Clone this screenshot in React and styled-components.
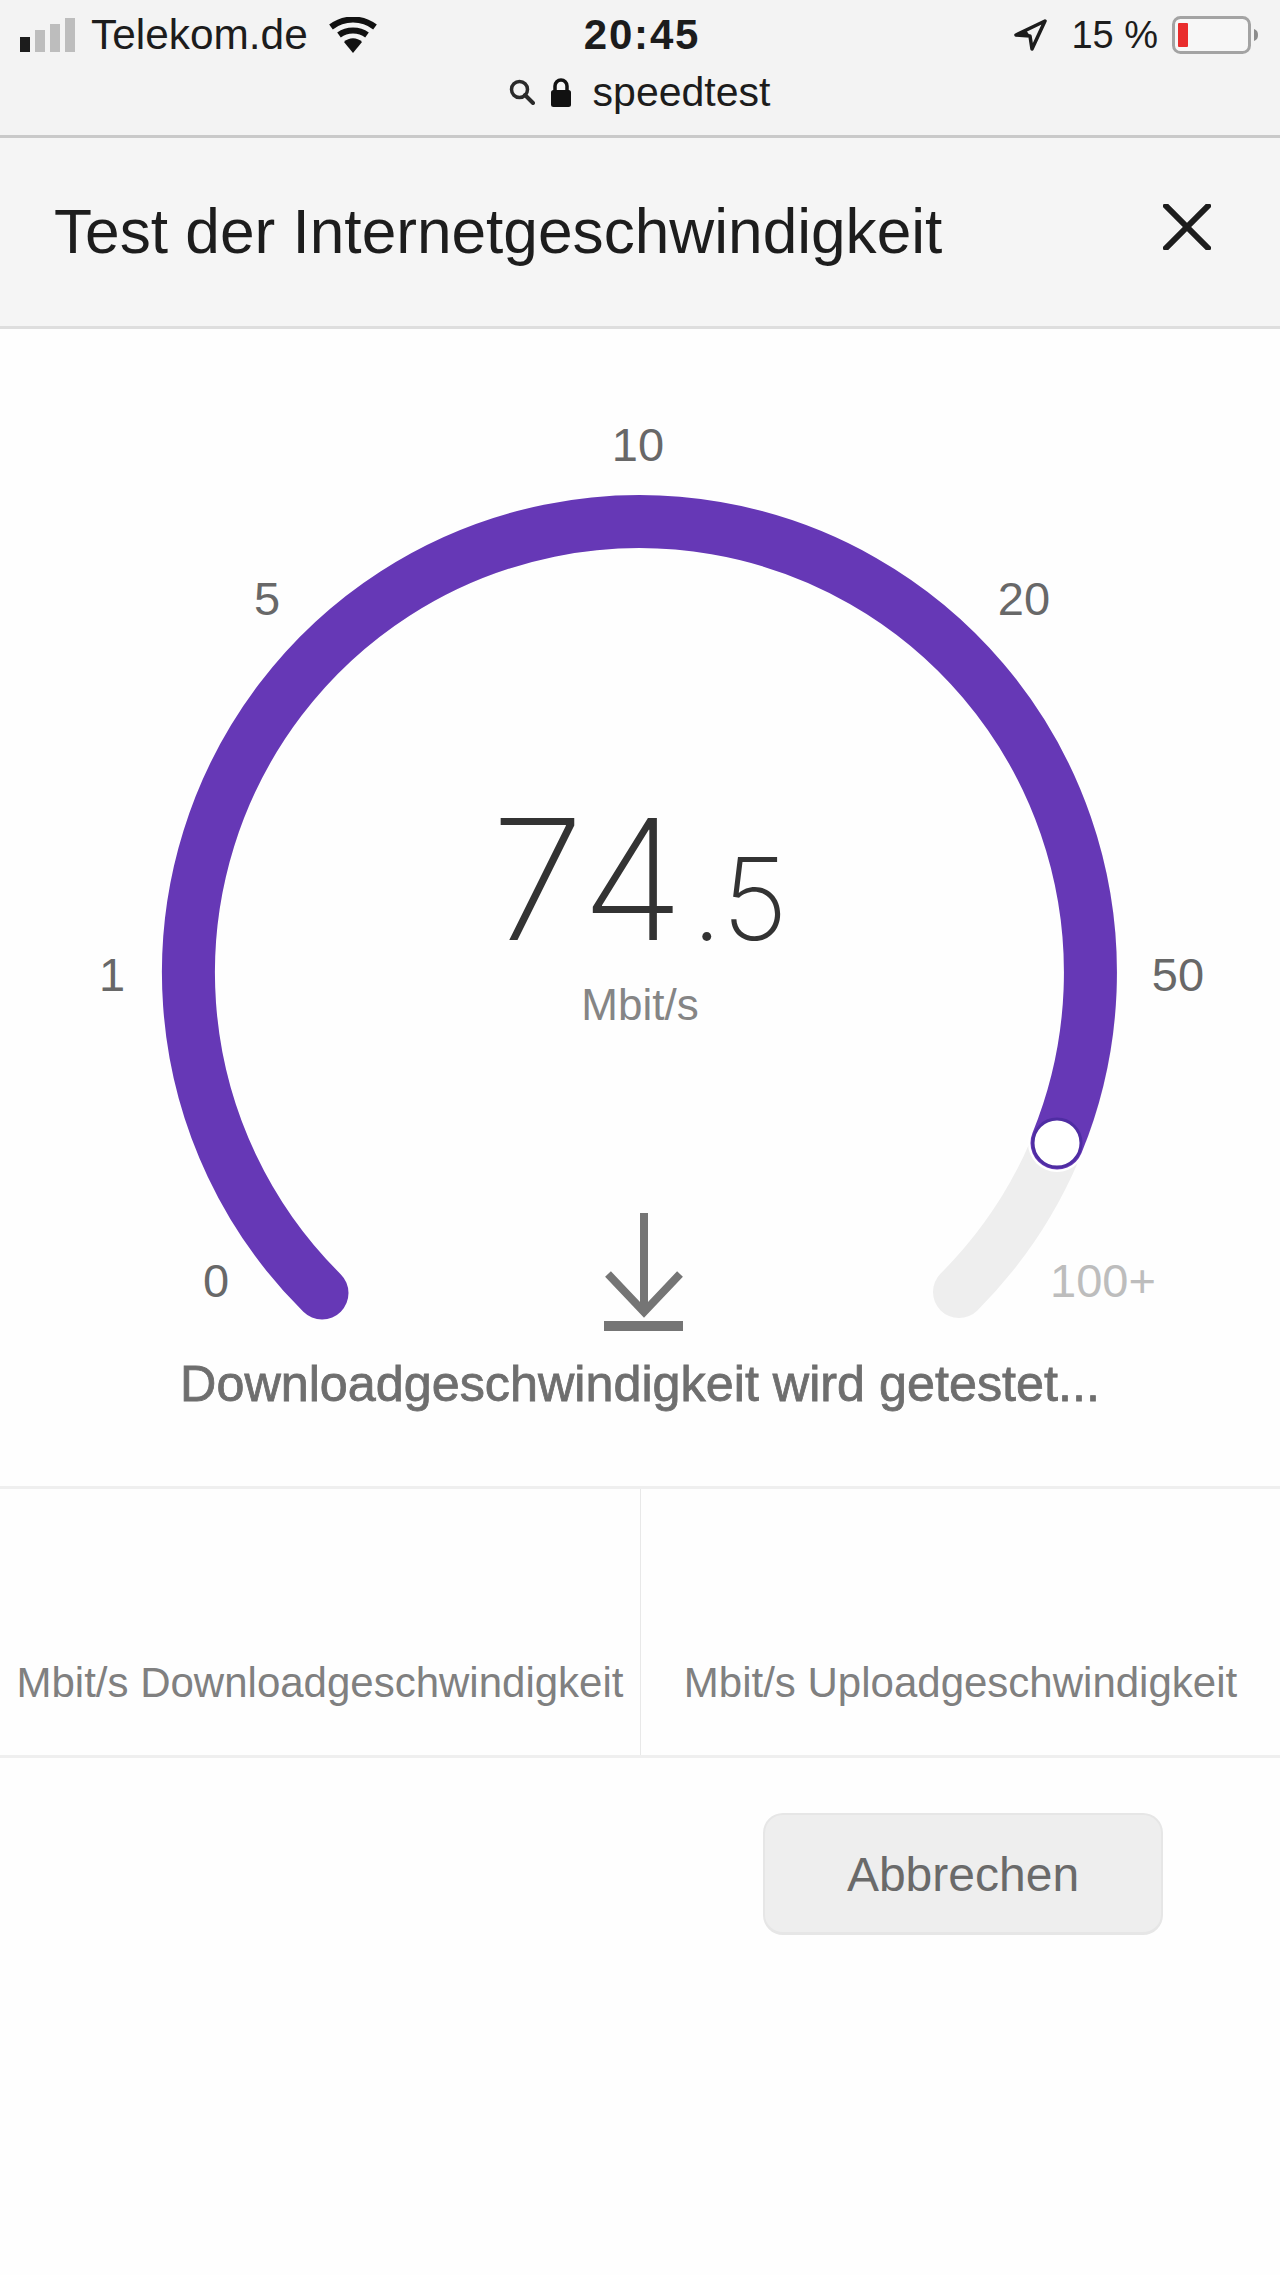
import React from "react";
import styled, { createGlobalStyle } from "styled-components";

const GlobalStyle = createGlobalStyle`
  html, body {
    margin: 0;
    padding: 0;
    background: #fff;
  }
  body {
    font-family: "Liberation Sans", Arial, sans-serif;
  }
`;

const Page = styled.div`
  width: 1280px;
  height: 2275px;
  background: #fefefe;
  overflow: hidden;
`;

const StatusBar = styled.div`
  height: 138px;
  box-sizing: border-box;
  background: #f3f3f3;
  border-bottom: 3px solid #c9c9c9;
  padding: 15px 21px 0 20px;
  color: #1c1c1c;
`;

const StatusRow = styled.div`
  display: grid;
  grid-template-columns: 1fr auto 1fr;
  align-items: center;
  height: 40px;
`;

const StatusLeft = styled.div`
  display: flex;
  align-items: center;
`;

const StatusRight = styled.div`
  display: flex;
  align-items: center;
  justify-content: flex-end;
`;

const Carrier = styled.span`
  font-size: 42.4px;
  line-height: 40px;
  margin-left: 16px;
  margin-right: 21px;
`;

const Clock = styled.span`
  font-size: 42px;
  line-height: 40px;
  font-weight: 700;
  letter-spacing: 1.8px;
  padding-left: 5px;
`;

const BatteryText = styled.span`
  font-size: 38px;
  line-height: 40px;
  margin-left: 24px;
  margin-right: 14px;
`;

const UrlRow = styled.div`
  display: flex;
  align-items: center;
  justify-content: center;
  gap: 15px;
  margin-top: 17px;
`;

const UrlText = styled.span`
  font-size: 41px;
  line-height: 40px;
  margin-left: 6px;
`;

const Header = styled.div`
  height: 191px;
  box-sizing: border-box;
  background: #f5f5f5;
  border-bottom: 3px solid #dedede;
  display: flex;
  align-items: center;
  justify-content: space-between;
  padding: 0 69px 0 54px;
`;

const Title = styled.h1`
  margin: 0;
  font-size: 62.2px;
  line-height: 70px;
  font-weight: 400;
  color: #1d1d1d;
`;

const CloseButton = styled.button`
  border: 0;
  padding: 0;
  background: none;
  display: block;
  height: 46px;
  margin-top: -10px;
`;

const Dial = styled.div`
  position: relative;
  width: 1280px;
  height: 1020px;
`;

const DialDrawing = styled.svg`
  display: block;
  width: 1280px;
  height: 1020px;
`;

const Tick = styled.span`
  position: absolute;
  left: ${(p) => p.$x}px;
  top: ${(p) => p.$y}px;
  transform: translate(-50%, -50%);
  font-size: 47px;
  line-height: 50px;
  color: ${(p) => (p.$off ? "#bdbdbd" : "#686868")};
`;

const Readout = styled.div`
  position: absolute;
  top: 455px;
  left: 0;
  width: 1280px;
  display: flex;
  flex-direction: column;
  align-items: center;
`;

const Speed = styled.div`
  font-family: Inter, "Liberation Sans", sans-serif;
  font-weight: 250;
  font-size: 168px;
  line-height: 190px;
  letter-spacing: 7px;
  color: #333;
  white-space: nowrap;
`;

const SpeedFraction = styled.span`
  font-size: 114px;
  letter-spacing: 1px;
`;

const Unit = styled.div`
  font-size: 44px;
  line-height: 48px;
  color: #858585;
  margin-top: -13px;
`;

const Caption = styled.div`
  height: 137px;
  text-align: center;
  font-size: 50.3px;
  line-height: 54px;
  color: #6e6e6e;
  -webkit-text-stroke: 0.8px #6e6e6e;
  padding-top: 8px;
  box-sizing: border-box;
`;

const StatsRow = styled.div`
  display: grid;
  grid-template-columns: 1fr 1fr;
  height: 272px;
  box-sizing: border-box;
  border-top: 3px solid #efefef;
  border-bottom: 3px solid #efefef;
`;

const StatCell = styled.div`
  display: flex;
  align-items: flex-end;
  justify-content: center;
  padding-bottom: 49px;
  font-size: 42px;
  line-height: 46px;
  color: #808080;
  white-space: nowrap;
  border-left: ${(p) => (p.$divided ? "1px solid #e8e8e8" : "0")};
`;

const Actions = styled.div`
  display: flex;
  justify-content: flex-end;
  padding: 55px 117px 0 0;
`;

const CancelButton = styled.button`
  width: 400px;
  height: 122px;
  box-sizing: border-box;
  background: #eeeeee;
  border: 2px solid #e6e6e6;
  border-bottom-width: 3px;
  border-radius: 20px;
  padding-top: 3px;
  font-family: "Liberation Sans", Arial, sans-serif;
  font-size: 48px;
  color: #6a6a6a;
`;

const SignalIcon = () => (
  <svg width="55" height="36" viewBox="0 0 55 36">
    <rect x="0" y="20" width="10" height="15" fill="#1c1c1c" />
    <rect x="15" y="13" width="10" height="22" fill="#bdbdbd" />
    <rect x="30" y="7" width="10" height="28" fill="#bdbdbd" />
    <rect x="45" y="1" width="10" height="34" fill="#bdbdbd" />
  </svg>
);

const WifiIcon = () => (
  <svg width="48" height="36" viewBox="0 0 48 36">
    <path d="M2 10 C15 0 33 0 46 10" fill="none" stroke="#111" strokeWidth="6" />
    <path d="M10 18 C18 12 30 12 38 18" fill="none" stroke="#111" strokeWidth="6" />
    <path d="M15 25 C20 20 28 20 33 25 L24 36 Z" fill="#111" />
  </svg>
);

const SearchIcon = () => (
  <svg width="26" height="26" viewBox="0 0 26 26">
    <circle cx="10.5" cy="10.5" r="8" fill="none" stroke="#2a2a2a" strokeWidth="3.5" />
    <path d="M16 16 L24 24" stroke="#2a2a2a" strokeWidth="4" strokeLinecap="round" />
  </svg>
);

const LockIcon = () => (
  <svg width="22" height="29" viewBox="0 0 22 29">
    <path d="M5 13 V8 a6 6 0 0 1 12 0 V13" fill="none" stroke="#111" strokeWidth="3.5" />
    <rect x="1" y="12" width="20" height="17" rx="2.5" fill="#111" />
  </svg>
);

const LocationIcon = () => (
  <svg width="33" height="32" viewBox="0 0 33 32">
    <path d="M31 2 L2 16 L16 17 L18 30 Z" fill="none" stroke="#1c1c1c" strokeWidth="3.5" strokeLinejoin="round" />
    <path d="M2 16 L16 17 L12 11 Z" fill="#1c1c1c" />
  </svg>
);

const BatteryIcon = () => (
  <svg width="87" height="38" viewBox="0 0 87 38">
    <rect x="1.5" y="1.5" width="76" height="35" rx="7" fill="#f7f7f7" stroke="#a3a3a3" strokeWidth="3" />
    <rect x="6" y="7" width="10" height="24" rx="1" fill="#e92c2c" />
    <path d="M82 13 C85 14 86 16 86 19 C86 22 85 24 82 25 Z" fill="#8c8c8c" />
  </svg>
);

const CloseIcon = () => (
  <svg width="48" height="46" viewBox="0 0 48 46">
    <path d="M3 2 L45 44 M45 2 L3 44" stroke="#1d1d1d" strokeWidth="6" strokeLinecap="round" />
  </svg>
);

// everything in here is in page coordinates, dial starts at y=329
const Gauge = () => (
  <DialDrawing viewBox="0 329 1280 1020">
    <path
      d="M 321 1292 A 451 451 0 1 1 959 1292"
      fill="none"
      stroke="#eeeeee"
      strokeWidth="52"
      strokeLinecap="round"
    />
    <circle cx="1057" cy="1143" r="29" fill="#fff" />
    <path
      d="M 322 1293 A 451 451 0 1 1 1057 1143"
      fill="none"
      stroke="#6638b6"
      strokeWidth="53"
      strokeLinecap="round"
    />
    <circle cx="1057" cy="1143" r="24" fill="#fff" stroke="#4f2da3" strokeWidth="3" />
    <path d="M644 1213 V1312 M608 1274 L644 1312 L680 1274" fill="none" stroke="#757575" strokeWidth="8" />
    <rect x="604" y="1321" width="79" height="10" fill="#757575" />
  </DialDrawing>
);

const ticks = [
  { label: "10", x: 638, y: 116 },
  { label: "5", x: 267, y: 270 },
  { label: "20", x: 1024, y: 270 },
  { label: "1", x: 112, y: 646 },
  { label: "50", x: 1178, y: 646 },
  { label: "0", x: 216, y: 952 },
  { label: "100+", x: 1103, y: 952, off: true },
];

const App = () => {
  return (
    <Page>
      <GlobalStyle />
      <StatusBar>
        <StatusRow>
          <StatusLeft>
            <SignalIcon />
            <Carrier>Telekom.de</Carrier>
            <WifiIcon />
          </StatusLeft>
          <Clock>20:45</Clock>
          <StatusRight>
            <LocationIcon />
            <BatteryText>15 %</BatteryText>
            <BatteryIcon />
          </StatusRight>
        </StatusRow>
        <UrlRow>
          <SearchIcon />
          <LockIcon />
          <UrlText>speedtest</UrlText>
        </UrlRow>
      </StatusBar>
      <Header>
        <Title>Test der Internetgeschwindigkeit</Title>
        <CloseButton>
          <CloseIcon />
        </CloseButton>
      </Header>
      <Dial>
        <Gauge />
        {ticks.map((tick) => (
          <Tick key={tick.label} $x={tick.x} $y={tick.y} $off={tick.off}>
            {tick.label}
          </Tick>
        ))}
        <Readout>
          <Speed>
            74<SpeedFraction>.5</SpeedFraction>
          </Speed>
          <Unit>Mbit/s</Unit>
        </Readout>
      </Dial>
      <Caption>Downloadgeschwindigkeit wird getestet...</Caption>
      <StatsRow>
        <StatCell>Mbit/s Downloadgeschwindigkeit</StatCell>
        <StatCell $divided>Mbit/s Uploadgeschwindigkeit</StatCell>
      </StatsRow>
      <Actions>
        <CancelButton>Abbrechen</CancelButton>
      </Actions>
    </Page>
  );
};

export default App;
